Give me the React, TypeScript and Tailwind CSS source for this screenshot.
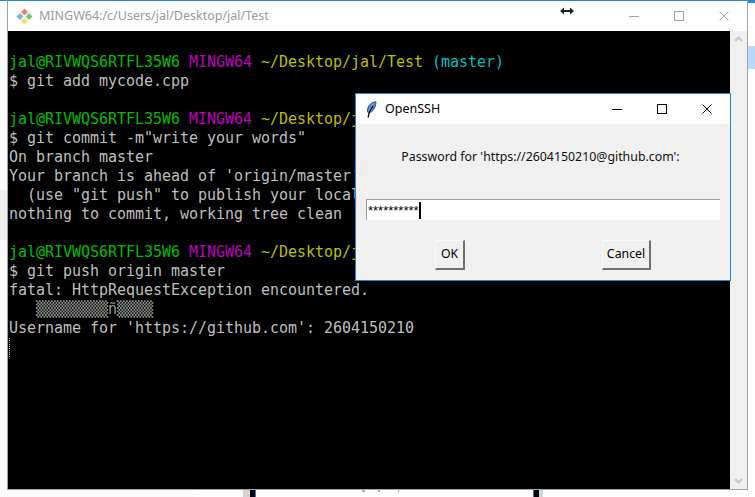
const mono = "font-['DejaVu_Sans_Mono','Liberation_Mono',monospace]";

function GitLogo() {
  return (
    <svg width="17" height="17" viewBox="0 0 17 17">
      <path d="M8.5 .5 L12 4 L8.5 7.5 L5 4 Z" fill="#e8807a" />
      <path d="M4 5 L7.5 8.5 L4 12 L.5 8.5 Z" fill="#7fb0ee" />
      <path d="M13 5 L16.5 8.5 L13 12 L9.5 8.5 Z" fill="#7fc270" />
      <path d="M8.5 9.5 L12 13 L8.5 16.5 L5 13 Z" fill="#f2dc80" />
    </svg>
  );
}

function Feather() {
  return (
    <svg width="11" height="17" viewBox="0 0 11 17">
      <path d="M10 .8 C5.5 1 1.8 4.5 1.5 9 C1.4 10.5 1.8 11.5 2.6 12 C7 11 9.8 6.5 10 .8 Z" fill="#5b92dc" stroke="#1c2b44" strokeWidth=".8" />
      <path d="M7 5 L3.5 11 L2 16.5" stroke="#000" strokeWidth="1.2" fill="none" />
    </svg>
  );
}

function WinButtons({ color }: { color: string }) {
  return (
    <div className="flex items-center gap-[35px]">
      <svg width="10" height="10" viewBox="0 0 10 10"><path d="M0 5.5H10" stroke={color} /></svg>
      <svg width="10" height="10" viewBox="0 0 10 10"><rect x=".5" y=".5" width="9" height="9" fill="none" stroke={color} /></svg>
      <svg width="10" height="10" viewBox="0 0 10 10"><path d="M.5 .5L9.5 9.5M9.5 .5L.5 9.5" stroke={color} /></svg>
    </div>
  );
}

function Prompt({ cut }: { cut?: boolean }) {
  return (
    <div>
      <span className="text-[#00bf00]">jal@RIVWQS6RTFL35W6 </span>
      <span className="text-[#bf00bf]">MINGW64 </span>
      {cut ? (
        <span className="text-[#bfbf00]">~/Desktop/j</span>
      ) : (
        <>
          <span className="text-[#bfbf00]">~/Desktop/jal/Test </span>
          <span className="text-[#00bfbf]">(master)</span>
        </>
      )}
    </div>
  );
}

function Blank() {
  return <div className="h-[19px]" />;
}

function TkButton({ label, width }: { label: string; width: string }) {
  return (
    <div className={`${width} h-[30px] flex items-center justify-center bg-[#f0f0f0] border border-[#fafafa] border-r-[#707070] border-b-[#707070] border-r-2 border-b-2 text-[12.3px] text-black`}>
      {label}
    </div>
  );
}

export default function App() {
  return (
    <div className="relative w-[755px] h-[497px] overflow-hidden bg-white flex flex-col font-['Noto_Sans','Open_Sans',sans-serif]">
      <div className="h-[490px] shrink-0 flex">
        {/* desktop, left of the terminal */}
        <div className="w-[7px] flex flex-col bg-[#fbfbfb]">
          <div className="h-px bg-[#2b86cf]" />
          <div className="h-[189px]" />
          <div className="h-[50px] bg-[#efefef]" />
        </div>

        {/* terminal window */}
        <div className="w-[741px] flex flex-col bg-white border border-[#a3a3a3] border-t-[#2b86cf]">
          <div className="h-[30px] shrink-0 flex items-center pl-[8px] pr-[18px]">
            <GitLogo />
            <span className="ml-[6px] text-[12.5px] text-[#999999]">MINGW64:/c/Users/jal/Desktop/jal/Test</span>
            <div className="ml-auto">
              <WinButtons color="#a0a0a0" />
            </div>
          </div>
          <div className="flex-1 flex min-h-0">
            <div className={`flex-1 bg-black pt-[3px] pl-px text-[15px] leading-[19px] tracking-[-0.03px] text-[#bfbfbf] whitespace-pre ${mono}`}>
              <Blank />
              <Prompt />
              <div>$ git add mycode.cpp</div>
              <Blank />
              <Prompt cut />
              <div>$ git commit -m"write your words"</div>
              <div>On branch master</div>
              <div>Your branch is ahead of 'origin/master'</div>
              <div>  (use "git push" to publish your local</div>
              <div>nothing to commit, working tree clean</div>
              <Blank />
              <Prompt cut />
              <div>$ git push origin master</div>
              <div>fatal: HttpRequestException encountered.</div>
              <div className="text-[#9a9a9a]">   ▒▒▒▒▒▒▒▒ñ▒▒▒▒</div>
              <div>Username for 'https://github.com': 2604150210</div>
              <div className="h-[19px] border-l border-dotted border-[#d0d0d0]" />
            </div>
            <div className="w-[17px] shrink-0 bg-[#f0f0f0] flex flex-col items-center justify-between py-[5px] text-[#c4c4c4]">
              <svg width="9" height="6" viewBox="0 0 9 6"><path d="M1 5L4.5 1.5L8 5" fill="none" stroke="currentColor" strokeWidth="2" /></svg>
              <svg width="9" height="6" viewBox="0 0 9 6"><path d="M1 1L4.5 4.5L8 1" fill="none" stroke="currentColor" strokeWidth="2" /></svg>
            </div>
          </div>
        </div>

        {/* desktop, right of the terminal */}
        <div className="w-[7px] flex flex-col">
          <div className="h-[3px] bg-[#2b86cf]" />
          <div className="h-[43px]" />
          <div className="h-[23px] bg-[#b9d9f9]" />
        </div>
      </div>

      {/* whatever shows under the terminal */}
      <div className="flex-1 flex items-start">
        <div className="w-[195px] h-[7px] bg-[#fbfbfb]" />
        <div className="ml-[48px] w-[7px] h-[7px] bg-[#d4d4d4]" />
        <div className="w-[5px] h-[7px] bg-black" />
        <div className="w-px h-[7px] bg-[#2b7cc4]" />
        <div className="ml-[106px] w-[3px] h-[2px] bg-[#8fb8dc]" />
        <div className="ml-[13px] w-[2px] h-[2px] bg-[#8fb8dc]" />
        <div className="ml-[18px] w-px h-[2px] bg-[#8fb8dc]" />
        <div className="ml-[134px] w-px h-[7px] bg-[#2b7cc4]" />
        <div className="w-[5px] h-[7px] bg-black" />
        <div className="w-[4px] h-[7px] bg-[#d4d4d4]" />
      </div>

      {/* drag cursor over the title bar */}
      <div className="absolute left-[559px] top-[5px]">
        <svg width="16" height="12" viewBox="0 0 16 12">
          <path d="M3 6H13" stroke="#222" strokeWidth="2" />
          <path d="M1 6L5 2.5V9.5Z M15 6L11 2.5V9.5Z" fill="#222" />
        </svg>
      </div>

      {/* password dialog */}
      <div className="absolute left-[355px] top-[93px] w-[376px] h-[188px] flex flex-col border border-[#1f86d8] bg-[#f0f0f0]">
        <div className="h-[30px] shrink-0 bg-white flex items-center pl-[10px] pr-[18px]">
          <Feather />
          <span className="ml-[8px] text-[12.5px] text-black">OpenSSH</span>
          <div className="ml-auto">
            <WinButtons color="#000000" />
          </div>
        </div>
        <div className="pt-[25px] pr-[5px] text-center text-[12.35px] leading-[16px] text-[#111111]">
          Password for 'https://2604150210@github.com':
        </div>
        <div className="mx-[10px] mt-[34px] h-[21px] bg-white border-t border-l border-[#a0a0a0] flex items-center pl-px">
          <span className="text-[13px] leading-none text-black font-['Liberation_Sans',Arial,sans-serif]">**********</span>
          <div className="w-[2px] h-[17px] bg-black" />
        </div>
        <div className="flex justify-between mt-[20px] pl-[79px] pr-[79px]">
          <TkButton label="OK" width="w-[30px]" />
          <TkButton label="Cancel" width="w-[49px]" />
        </div>
      </div>
    </div>
  );
}
